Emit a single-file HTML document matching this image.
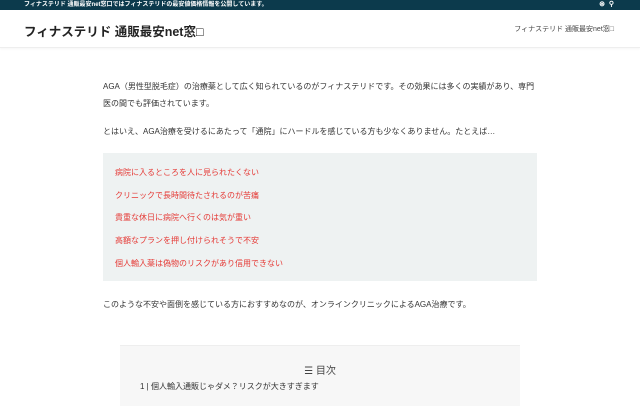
<!DOCTYPE html>
<html><head><meta charset="utf-8"><style>
body{margin:0;width:640px;height:400px;overflow:hidden;background:#fff;font-family:"Liberation Sans","Noto Sans CJK JP",sans-serif;color:#333}
.top{height:10px;background:#0c3a4c;color:#fff;font-size:6px;line-height:10px;padding-left:24px;position:relative;font-weight:bold}
.top .ic{position:absolute;right:26px;top:0;font-size:7px}
.hd{height:37px;position:relative;border-bottom:1px solid #eee;box-shadow:0 1px 2px rgba(0,0,0,.04)}
.hd .t{position:absolute;left:24px;top:11px;font-size:12.5px;font-weight:bold;color:#222}
.hd .n{position:absolute;right:26px;top:14px;font-size:7px;color:#444}
.p{position:absolute;left:103px;font-size:8px;color:#333;line-height:17px;width:434px}
.box{position:absolute;left:103px;top:153px;width:434px;height:128px;background:#eef2f2}
.box div{position:absolute;left:12px;font-size:8px;color:#e53935}
.toc{position:absolute;left:120px;top:345px;width:400px;height:60px;background:#f7f7f7;border-top:1px solid #eee}
</style></head><body>
<div class="top">フィナステリド 通販最安net窓口ではフィナステリドの最安値価格情報を公開しています。<span class="ic">⊛ &nbsp;⚲</span></div>
<div class="hd"><div class="t">フィナステリド 通販最安net窓□</div><div class="n">フィナステリド 通販最安net窓□</div></div>
<div class="p" style="top:78px">AGA（男性型脱毛症）の治療薬として広く知られているのがフィナステリドです。その効果には多くの実績があり、専門医の間でも評価されています。</div>
<div class="p" style="top:123px">とはいえ、AGA治療を受けるにあたって「通院」にハードルを感じている方も少なくありません。たとえば…</div>
<div class="box">
<div style="top:14px">病院に入るところを人に見られたくない</div>
<div style="top:37px">クリニックで長時間待たされるのが苦痛</div>
<div style="top:59px">貴重な休日に病院へ行くのは気が重い</div>
<div style="top:82px">高額なプランを押し付けられそうで不安</div>
<div style="top:105px">個人輸入薬は偽物のリスクがあり信用できない</div>
</div>
<div class="p" style="top:296px">このような不安や面倒を感じている方におすすめなのが、オンラインクリニックによるAGA治療です。</div>
<div class="toc">
<div style="position:absolute;left:0;width:400px;top:16px;text-align:center;font-size:10px;color:#444">☰ 目次</div>
<div style="position:absolute;left:20px;top:35px;font-size:8px;color:#333">1 | 個人輸入通販じゃダメ？リスクが大きすぎます</div>
</div>
</body></html>
